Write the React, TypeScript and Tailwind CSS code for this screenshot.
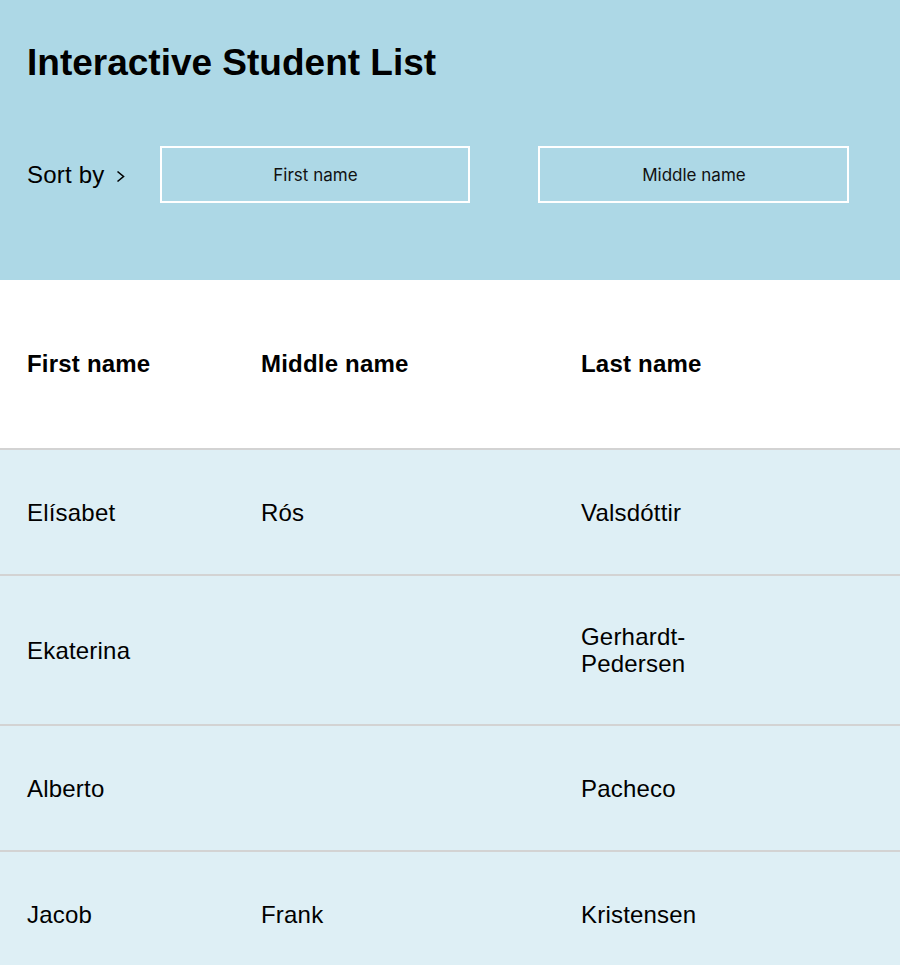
import React from "react";

const rows = [
  { first: "Elísabet", middle: "Rós", last: "Valsdóttir" },
  { first: "Ekaterina", middle: "", last: "Gerhardt-Pedersen" },
  { first: "Alberto", middle: "", last: "Pacheco" },
  { first: "Jacob", middle: "Frank", last: "Kristensen" },
];

export default function App() {
  return (
    <div className="w-[900px] h-[965px] overflow-hidden bg-white text-black font-['Liberation_Sans',Arial,sans-serif]">
      <header className="h-[280px] bg-[#add8e6] pl-[27px] pt-[42px]">
        <h1 className="text-[37px] leading-[42px] font-bold">Interactive Student List</h1>
        <div className="mt-[62px] flex items-center">
          <span className="text-[24px] leading-[28px] tracking-[0.2px]">Sort by</span>
          <svg className="ml-[12px] mt-[3px]" width="9" height="13" viewBox="0 0 9 13" fill="none">
            <polyline points="1.5,1.5 7.5,6.5 1.5,11.5" stroke="#000" strokeWidth="1.6" />
          </svg>
          <button className="ml-[35px] w-[310px] h-[57px] pt-[2px] border-2 border-white text-[17px] font-['Inter','Liberation_Sans',sans-serif] text-[#111]">
            First name
          </button>
          <button className="ml-[68px] w-[311px] h-[57px] pt-[2px] border-2 border-white text-[17px] font-['Inter','Liberation_Sans',sans-serif] text-[#111]">
            Middle name
          </button>
        </div>
      </header>
      <div className="grid grid-cols-[234px_320px_1fr] items-center pl-[27px] h-[170px] border-b-2 border-[#d3d3d3] text-[24px] font-bold tracking-[0.2px]">
        <div>First name</div>
        <div>Middle name</div>
        <div>Last name</div>
      </div>
      {rows.map((r, i) => (
        <div
          key={i}
          className="grid grid-cols-[234px_320px_1fr] items-center pl-[27px] min-h-[126px] py-[47px] border-b-2 border-[#d3d3d3] bg-[#deeff5] text-[24px] leading-[27px] tracking-[0.2px]"
        >
          <div>{r.first}</div>
          <div>{r.middle}</div>
          <div className="max-w-[150px]">{r.last}</div>
        </div>
      ))}
    </div>
  );
}
